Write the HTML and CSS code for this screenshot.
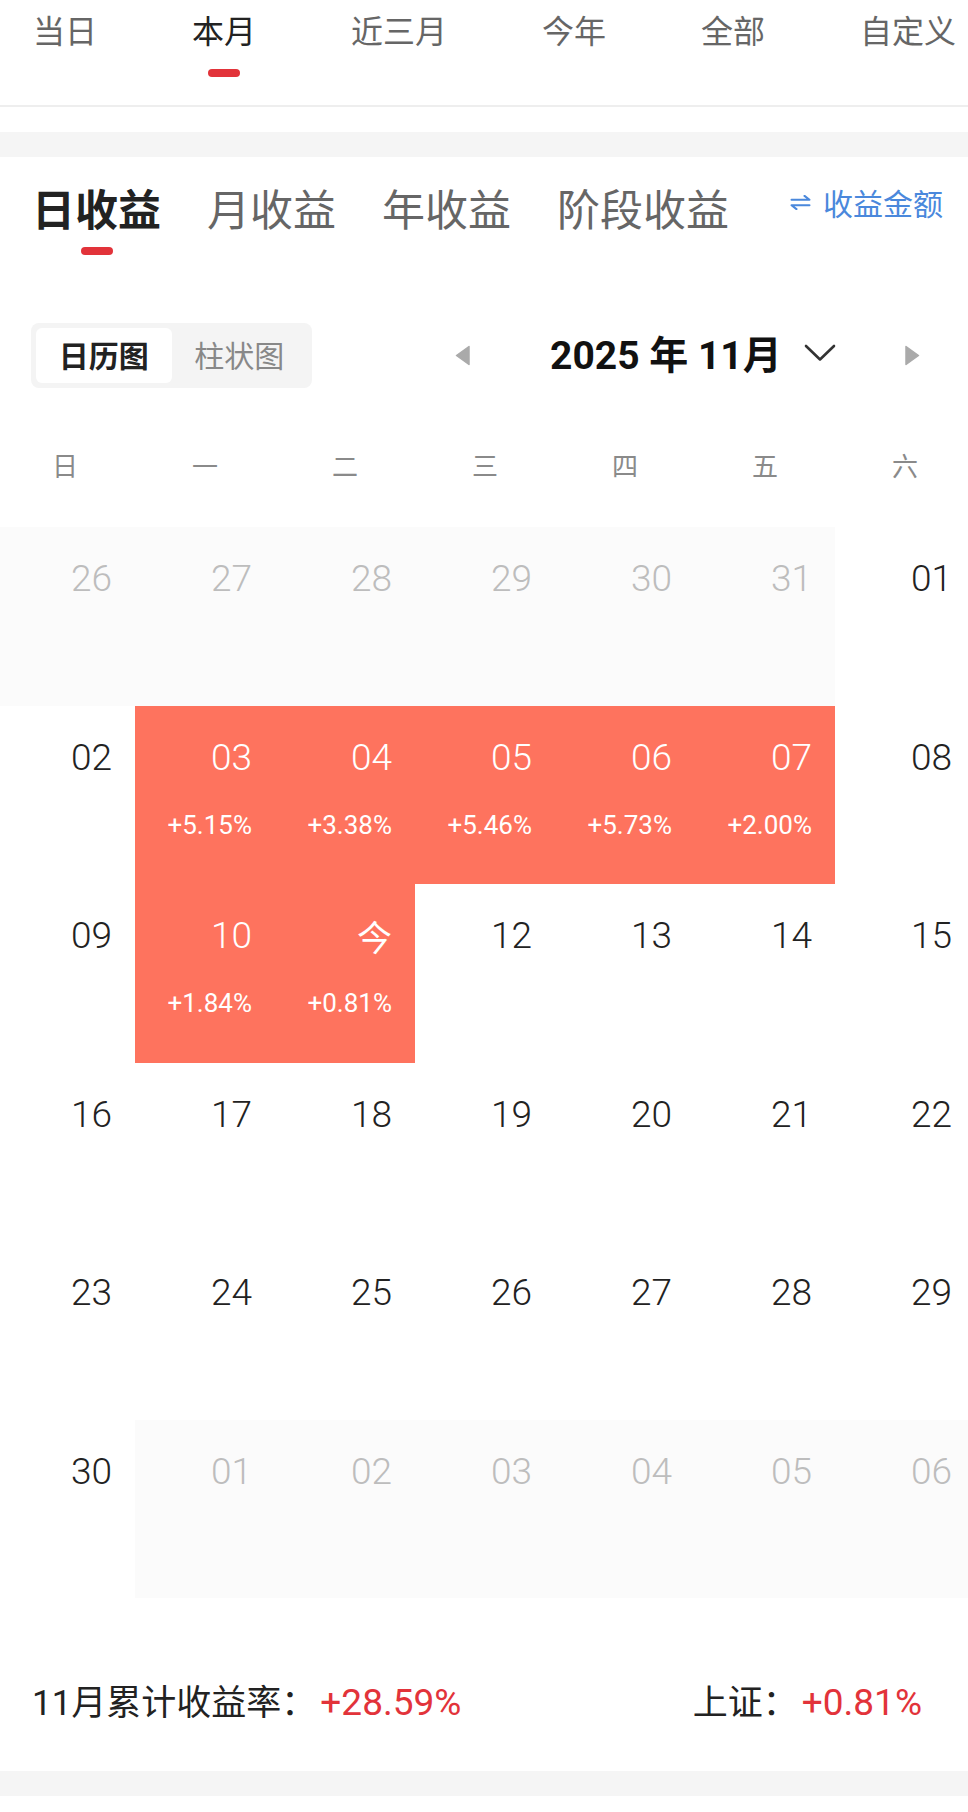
FILE: index.html
```html
<!DOCTYPE html>
<html lang="zh-CN">
<head>
<meta charset="utf-8">
<title>收益日历</title>
<link rel="stylesheet" href="styles.css">
</head>
<body>
<div class="page">
  <div class="top-tabs">
    <div class="ttab"><span class="ttab-text">当日</span></div>
    <div class="ttab active"><span class="ttab-text">本月</span><i class="pill"></i></div>
    <div class="ttab"><span class="ttab-text">近三月</span></div>
    <div class="ttab"><span class="ttab-text">今年</span></div>
    <div class="ttab"><span class="ttab-text">全部</span></div>
    <div class="ttab"><span class="ttab-text">自定义</span></div>
  </div>
  <div class="gap-white"></div>
  <div class="gap-gray"></div>

  <section class="profit">
    <div class="ptabs">
      <div class="ptab active"><span class="ptab-text">日收益</span><i class="pill"></i></div>
      <div class="ptab"><span class="ptab-text">月收益</span></div>
      <div class="ptab"><span class="ptab-text">年收益</span></div>
      <div class="ptab"><span class="ptab-text">阶段收益</span></div>
      <div class="amount">
        <svg class="swap" width="21" height="15" viewBox="0 0 21 15"><path d="M1.5 4.8H19.5L14.5 0.9M19.5 10.2H1.5L6.5 14.1" fill="none" stroke="#4a88dc" stroke-width="2" stroke-linecap="round" stroke-linejoin="round"/></svg>
        <span class="amount-text">收益金额</span>
      </div>
    </div>

    <div class="toolbar">
      <div class="seg">
        <div class="seg-item on">日历图</div>
        <div class="seg-item">柱状图</div>
      </div>
      <div class="month-nav">
        <svg class="tri" width="15" height="21" viewBox="0 0 15 21"><path d="M14 1.5V19.5L1.5 10.5Z" fill="#aaaaaa" stroke="#aaaaaa" stroke-width="1.5" stroke-linejoin="round"/></svg>
        <span class="month-title">2025 年 11月</span>
        <svg class="chev" width="32" height="18" viewBox="0 0 32 18"><path d="M2 2L16 15.5L30 2" fill="none" stroke="#333" stroke-width="2.6" stroke-linecap="round" stroke-linejoin="round"/></svg>
        <svg class="tri tri-right" width="15" height="21" viewBox="0 0 15 21"><path d="M1 1.5V19.5L13.5 10.5Z" fill="#aaaaaa" stroke="#aaaaaa" stroke-width="1.5" stroke-linejoin="round"/></svg>
      </div>
    </div>

    <div class="cal">
      <div class="week">
        <span>日</span><span>一</span><span>二</span><span>三</span><span>四</span><span>五</span><span>六</span>
      </div>
      <div class="grid">
        <div class="cell other"><span class="num">26</span></div>
        <div class="cell other"><span class="num">27</span></div>
        <div class="cell other"><span class="num">28</span></div>
        <div class="cell other"><span class="num">29</span></div>
        <div class="cell other"><span class="num">30</span></div>
        <div class="cell other"><span class="num">31</span></div>
        <div class="cell"><span class="num">01</span></div>

        <div class="cell"><span class="num">02</span></div>
        <div class="cell up"><span class="num">03</span><span class="pct">+5.15%</span></div>
        <div class="cell up"><span class="num">04</span><span class="pct">+3.38%</span></div>
        <div class="cell up"><span class="num">05</span><span class="pct">+5.46%</span></div>
        <div class="cell up"><span class="num">06</span><span class="pct">+5.73%</span></div>
        <div class="cell up"><span class="num">07</span><span class="pct">+2.00%</span></div>
        <div class="cell"><span class="num">08</span></div>

        <div class="cell"><span class="num">09</span></div>
        <div class="cell up"><span class="num">10</span><span class="pct">+1.84%</span></div>
        <div class="cell up"><span class="num today">今</span><span class="pct">+0.81%</span></div>
        <div class="cell"><span class="num">12</span></div>
        <div class="cell"><span class="num">13</span></div>
        <div class="cell"><span class="num">14</span></div>
        <div class="cell"><span class="num">15</span></div>

        <div class="cell"><span class="num">16</span></div>
        <div class="cell"><span class="num">17</span></div>
        <div class="cell"><span class="num">18</span></div>
        <div class="cell"><span class="num">19</span></div>
        <div class="cell"><span class="num">20</span></div>
        <div class="cell"><span class="num">21</span></div>
        <div class="cell"><span class="num">22</span></div>

        <div class="cell"><span class="num">23</span></div>
        <div class="cell"><span class="num">24</span></div>
        <div class="cell"><span class="num">25</span></div>
        <div class="cell"><span class="num">26</span></div>
        <div class="cell"><span class="num">27</span></div>
        <div class="cell"><span class="num">28</span></div>
        <div class="cell"><span class="num">29</span></div>

        <div class="cell"><span class="num">30</span></div>
        <div class="cell other"><span class="num">01</span></div>
        <div class="cell other"><span class="num">02</span></div>
        <div class="cell other"><span class="num">03</span></div>
        <div class="cell other"><span class="num">04</span></div>
        <div class="cell other"><span class="num">05</span></div>
        <div class="cell other"><span class="num">06</span></div>
      </div>
    </div>

    <div class="summary">
      <div class="sum-item">11月累计收益率：<span class="red">+28.59%</span></div>
      <div class="sum-item">上证：<span class="red">+0.81%</span></div>
    </div>
  </section>
  <div class="gap-gray bottom"></div>
</div>
</body>
</html>
```

FILE: styles.css
```css
html, body {
  margin: 0;
  padding: 0;
  background: #ffffff;
}
body {
  width: 968px;
  overflow: hidden;
  font-family: Roboto, "Noto Sans CJK SC", sans-serif;
  color: #222222;
}
.page {
  width: 968px;
  overflow: hidden;
}
.pill {
  display: block;
  width: 32px;
  height: 8px;
  border-radius: 4px;
  background: #e2333a;
}

/* top period tabs */
.top-tabs {
  display: flex;
  gap: 95px;
  height: 107px;
  box-sizing: border-box;
  padding: 13px 0 0 33px;
  border-bottom: 2px solid #eeeeee;
  white-space: nowrap;
  overflow: hidden;
}
.ttab {
  flex: none;
  display: flex;
  flex-direction: column;
  align-items: center;
}
.ttab-text {
  font-family: "Noto Sans CJK SC", sans-serif;
  font-size: 32px;
  line-height: 32px;
  color: #666666;
}
.ttab.active .ttab-text {
  color: #222222;
}
.ttab .pill {
  margin-top: 24px;
}
.gap-white {
  height: 25px;
}
.gap-gray {
  height: 25px;
  background: #f5f5f5;
}
.gap-gray.bottom {
  margin-top: 49px;
}

/* profit type tabs */
.profit {
  padding-top: 29px;
}
.ptabs {
  display: flex;
  align-items: flex-start;
  gap: 46px;
  padding: 0 25px 0 32px;
}
.ptab {
  flex: none;
  display: flex;
  flex-direction: column;
  align-items: center;
}
.ptab-text {
  font-family: "Noto Sans CJK SC", sans-serif;
  font-size: 43px;
  line-height: 42px;
  color: #666666;
}
.ptab.active .ptab-text {
  color: #222222;
  font-weight: 700;
}
.ptab .pill {
  margin-top: 19px;
}
.amount {
  margin-left: auto;
  display: flex;
  align-items: center;
  gap: 12px;
  padding-top: 1px;
}
.amount-text {
  font-family: "Noto Sans CJK SC", sans-serif;
  font-size: 30px;
  line-height: 30px;
  color: #4a88dc;
}

/* toolbar */
.toolbar {
  display: flex;
  align-items: center;
  height: 65px;
  margin-top: 68px;
}
.seg {
  margin-left: 31px;
  width: 281px;
  height: 65px;
  box-sizing: border-box;
  padding: 5px;
  border-radius: 8px;
  background: #f4f4f4;
  display: flex;
}
.seg-item {
  flex: 1;
  display: flex;
  align-items: center;
  justify-content: center;
  border-radius: 6px;
  font-family: "Noto Sans CJK SC", sans-serif;
  font-size: 30px;
  line-height: 30px;
  color: #888888;
  padding-bottom: 4px;
}
.seg-item.on {
  background: #ffffff;
  color: #222222;
  font-weight: 700;
}
.month-nav {
  margin-left: auto;
  margin-right: 48px;
  width: 465px;
  display: flex;
  align-items: center;
}
.tri {
  flex: none;
  display: block;
}
.month-title {
  margin-left: 80px;
  font-size: 39px;
  line-height: 40px;
  font-weight: 700;
  color: #111111;
  white-space: nowrap;
}
.chev {
  display: block;
  margin-left: 22px;
  margin-bottom: 6px;
}
.tri-right {
  margin-left: auto;
}

/* calendar */
.cal {
  overflow: hidden;
}
.week,
.grid {
  display: grid;
  grid-template-columns: repeat(7, 140px);
  width: 980px;
  margin-left: -5px;
}
.week {
  margin-top: 64px;
}
.week span {
  text-align: center;
  font-family: "Noto Sans CJK SC", sans-serif;
  font-size: 26px;
  line-height: 26px;
  color: #8a8a8a;
}
.grid {
  margin-top: 49px;
  grid-auto-rows: 178.5px;
}
.cell {
  display: flex;
  flex-direction: column;
  align-items: flex-end;
  box-sizing: border-box;
  padding: 33px 23px 0 0;
}
.num {
  font-size: 37px;
  line-height: 37px;
  font-weight: 300;
  color: #222222;
}
.num.today {
  font-family: "Noto Sans CJK SC", sans-serif;
  font-size: 35px;
  font-weight: 400;
}
.pct {
  margin-top: 37px;
  font-size: 26px;
  line-height: 25px;
  font-weight: 400;
}
.cell.other {
  background: #fbfbfb;
}
.cell.other .num {
  color: #bdbdbd;
}
.cell.up {
  background: #fe735e;
}
.cell.up .num,
.cell.up .pct {
  color: #ffffff;
}

/* summary */
.summary {
  display: flex;
  justify-content: space-between;
  margin-top: 87px;
  padding: 0 46px 0 32px;
}
.sum-item {
  font-size: 35px;
  line-height: 36px;
  color: #222222;
  white-space: nowrap;
}
.red {
  color: #e2333a;
  font-size: 37px;
  margin-left: 4px;
}
```
